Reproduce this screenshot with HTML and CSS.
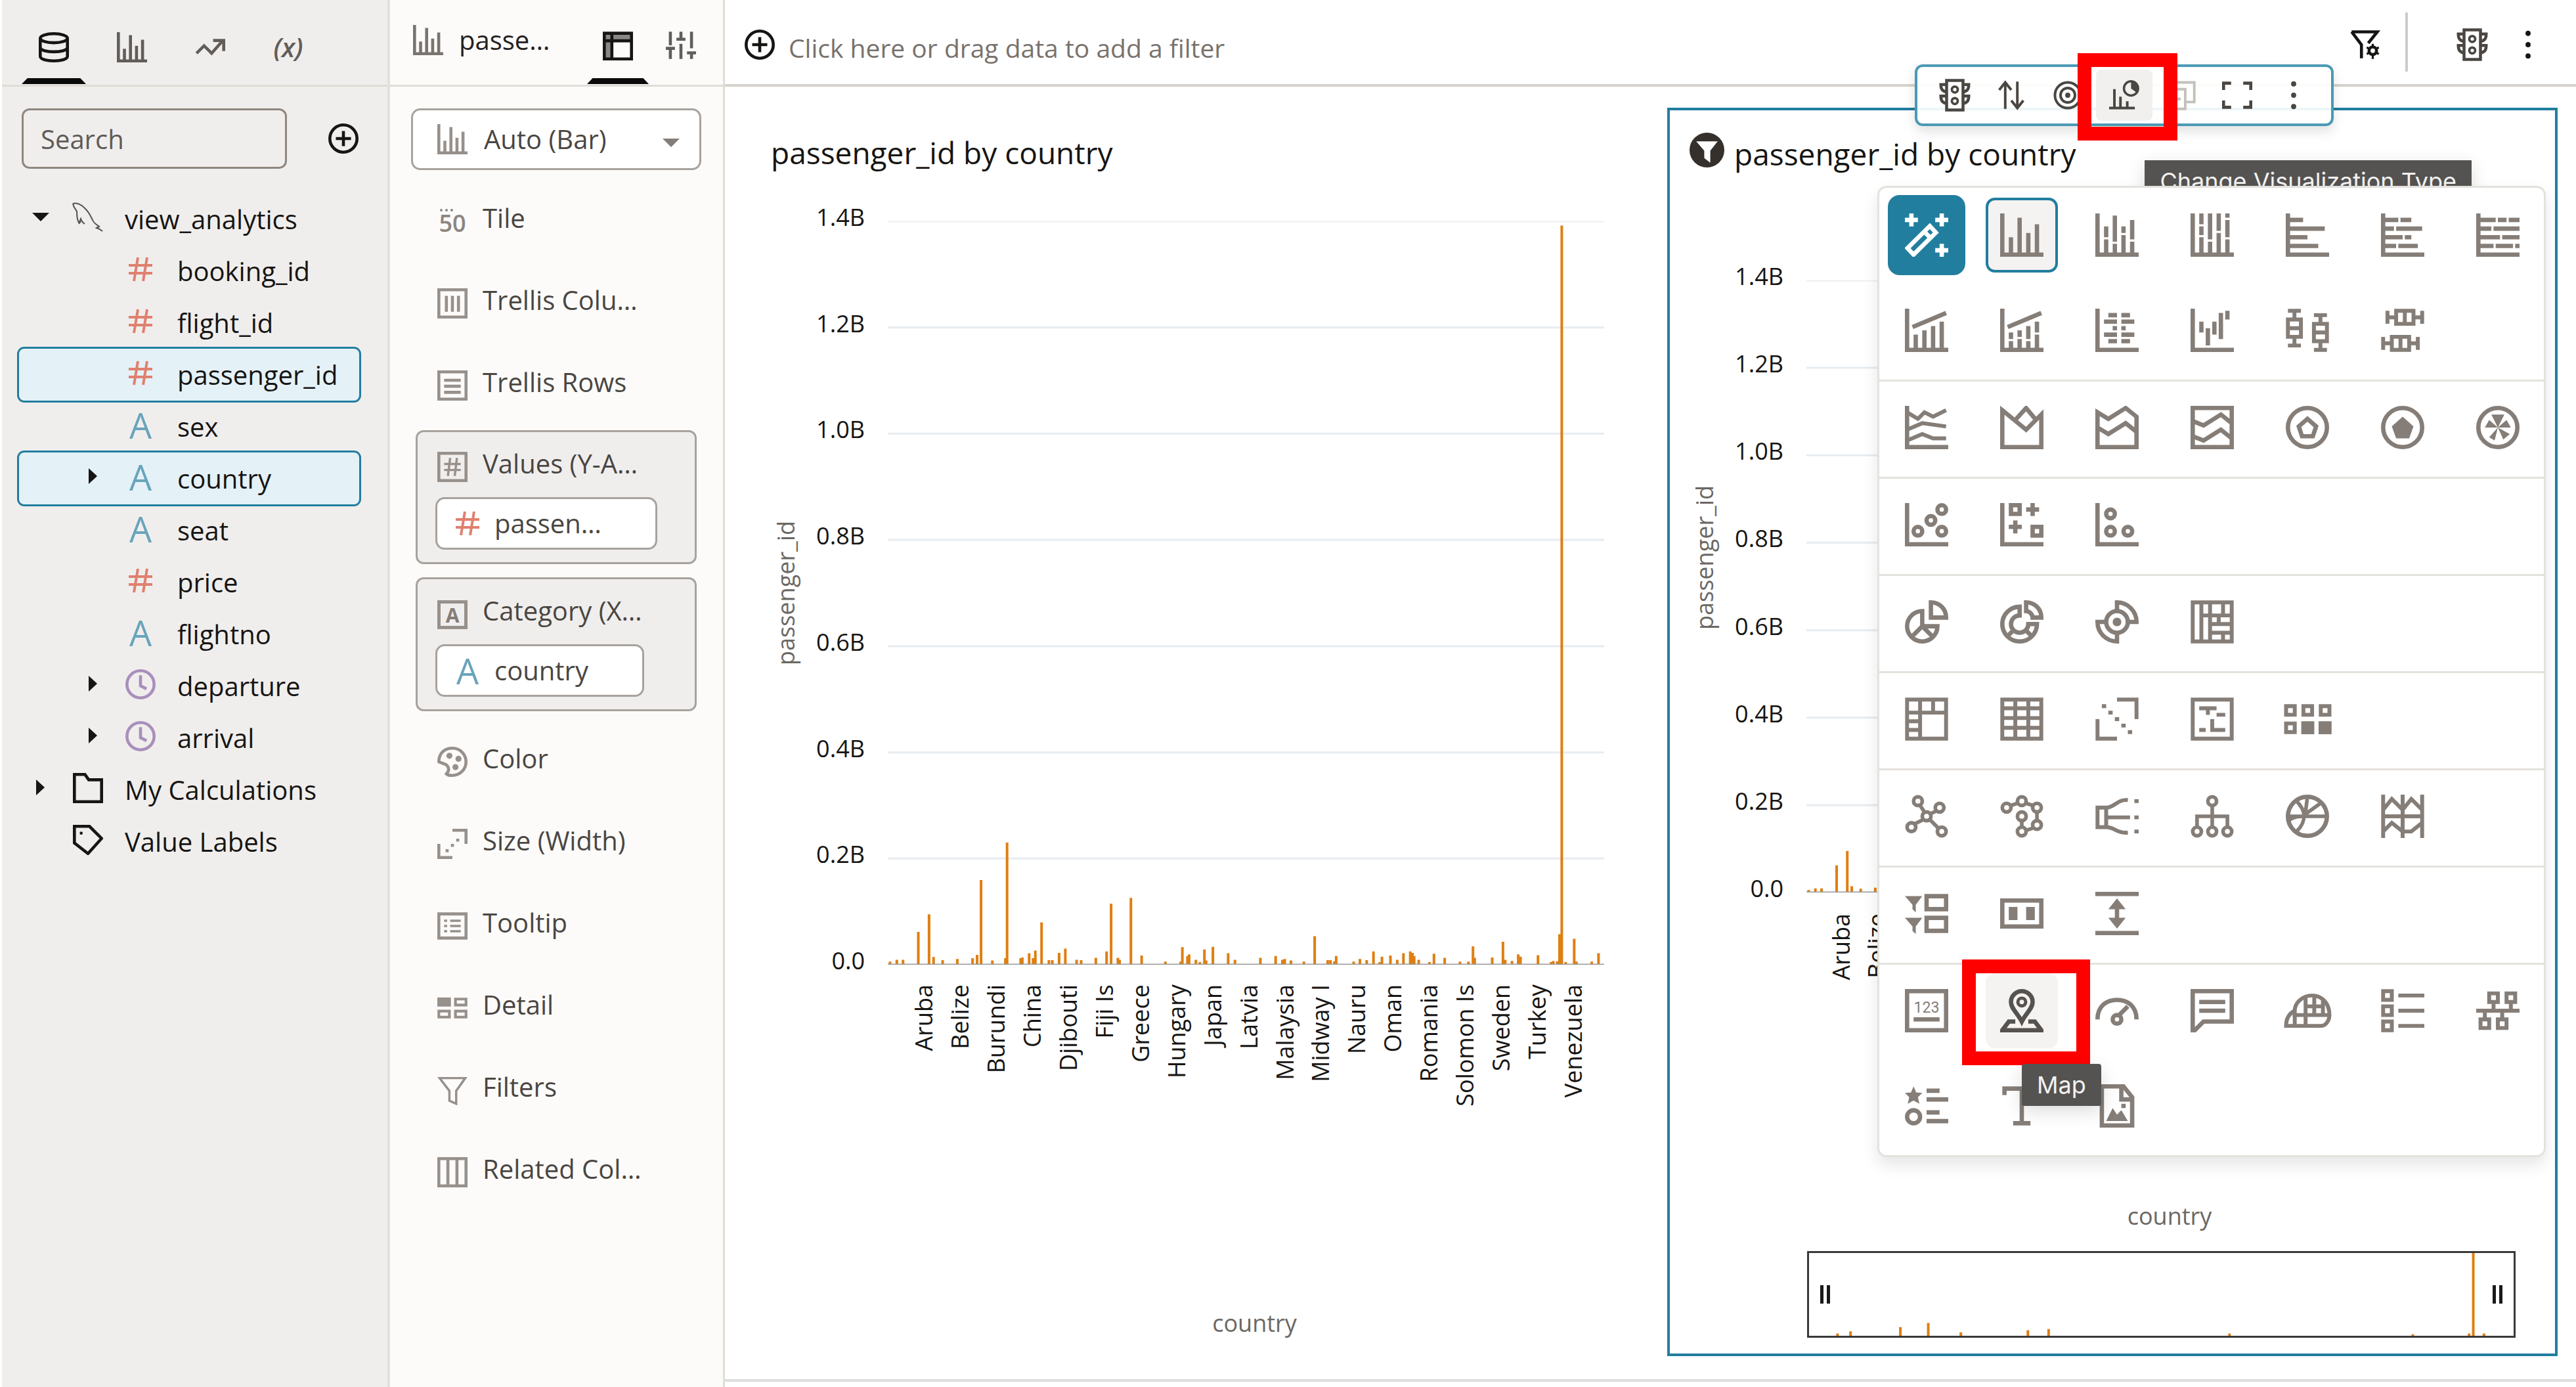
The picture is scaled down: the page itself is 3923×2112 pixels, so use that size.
FILE: index.html
```html
<!DOCTYPE html>
<html lang="en">
<head>
<meta charset="utf-8">
<meta name="viewport" content="width=device-width, initial-scale=1">
<title>passenger_id by country</title>
<link rel="stylesheet" href="styles.css">
</head>
<body>
<svg class="sprite" aria-hidden="true">
  <defs>
    <!-- chart data: one stroke per country, measured from the zero line -->
    <symbol id="plot" viewBox="0 0 1267 1947" preserveAspectRatio="none">
      <path class="gridlines" d="M0 0H1267M0 278H1267M0 556H1267M0 834H1267M0 1113H1267M0 1391H1267M0 1669H1267"/>
      <path class="bars" d="M4 1947v-8M16 1947v-13M27 1947v-13M54 1947v-86M73 1947v-132M81 1947v-20M97 1947v-12M123 1947v-15M150 1947v-17M158 1947v-26M165 1947v-222M185 1947v-11M208 1947v-17M211 1947v-320M235 1947v-17M238 1947v-19M250 1947v-30M257 1947v-17M261 1947v-37M272 1947v-111M285 1947v-12M291 1947v-12M303 1947v-31M314 1947v-42M334 1947v-13M342 1947v-12M368 1947v-18M387 1947v-35M395 1947v-160M407 1947v-18M410 1947v-13M430 1947v-175M449 1947v-24M491 1947v-8M518 1947v-8M521 1947v-46M530 1947v-23M533 1947v-27M545 1947v-13M552 1947v-7M560 1947v-40M563 1947v-11M575 1947v-47M602 1947v-30M614 1947v-13M659 1947v-18M686 1947v-23M698 1947v-13M702 1947v-15M713 1947v-11M736 1947v-8M755 1947v-75M778 1947v-12M783 1947v-12M790 1947v-9M793 1947v-23M824 1947v-8M835 1947v-15M847 1947v-12M859 1947v-35M870 1947v-7M874 1947v-21M889 1947v-24M901 1947v-13M912 1947v-30M924 1947v-35M928 1947v-31M931 1947v-23M939 1947v-13M958 1947v-7M966 1947v-29M985 1947v-18M1012 1947v-8M1027 1947v-8M1035 1947v-48M1038 1947v-18M1069 1947v-19M1088 1947v-60M1092 1947v-13M1104 1947v-10M1115 1947v-27M1119 1947v-21M1150 1947v-25M1173 1947v-7M1177 1947v-10M1184 1947v-9M1188 1947v-80M1192 1947V11M1199 1947v-7M1214 1947v-68M1218 1947v-8M1245 1947v-8M1257 1947v-30"/>
      <path class="zero" d="M0 1947H1267"/>
    </symbol>

    <!-- field and panel icons -->
    <symbol id="db" viewBox="0 0 20 20"><ellipse cx="10" cy="4" rx="9" ry="3"/><path d="M1 4v12c0 4 18 4 18 0V4M1 10c0 4 18 4 18 0"/></symbol>
    <symbol id="trend" viewBox="0 0 20 20"><path d="M1 14l5-5 5 5 7-8M12 5.500h7v7"/></symbol>
    <symbol id="plus" viewBox="0 0 20 20"><circle cx="10" cy="10" r="9"/><path d="M10 5v10M5 10h10"/></symbol>
    <symbol id="hash" viewBox="0 0 20 20"><path d="M8 1L5 19M15 1l-3 18M1 7h18M1 13h18"/></symbol>
    <symbol id="clock" viewBox="0 0 20 20"><circle cx="10" cy="10" r="9"/><path d="M10 4v7l4 2"/></symbol>
    <symbol id="folder" viewBox="0 0 20 20"><path d="M1 1h7l2.500 3.500H19V19H1z"/></symbol>
    <symbol id="tag" viewBox="0 0 20 20"><path d="M1 1h10l8 8-9 10L1 12z"/><circle class="f" cx="5.500" cy="5.500" r="1"/></symbol>
    <symbol id="dolphin" viewBox="0 0 48 46"><path d="M1 2c8-2 14 3 18 7 6 5 9 12 12 18 2 5 6 7 10 10l-4 2c3 1 6 2 9 5M1 2c1 6 4 8 6 12 0 6 0 12 3 17 2-2 2-4 3-6 1 4 3 6 6 8M10 33l3-4"/></symbol>
    <symbol id="down" viewBox="0 0 26 13"><path class="f" d="M0 0h26L13 13z"/></symbol>
    <symbol id="right" viewBox="0 0 14 26"><path class="f" d="M0 0l14 13L0 26z"/></symbol>
    <symbol id="layout" viewBox="0 0 20 20"><path fill="currentColor" fill-opacity=".5" stroke="none" d="M1 2h18v5H6v12H1z"/><path d="M1 2h18v17H1zM6 2v17M1 7h18"/></symbol>
    <symbol id="sliders" viewBox="0 0 20 20"><path d="M3 1v9M3 13v6M10 1v5M10 9v10M17 1v11M17 15v4M0 12h6M7 6h6M14 15h6"/></symbol>
    <symbol id="columns" viewBox="0 0 20 20"><path d="M1 1h18v18H1zM6 5v10.500M10 5v10.500M14 5v10.500"/></symbol>
    <symbol id="rows" viewBox="0 0 20 20"><path d="M1 1h18v18H1zM4.500 6.500h11M4.500 10.500h11M4.500 14.500h11"/></symbol>
    <symbol id="boxhash" viewBox="0 0 20 20"><path d="M1 1h18v18H1z"/><path stroke-width="1.500" d="M8.500 4L7 16M13 4l-1.500 12M4.500 8h11M4.500 12h11"/></symbol>
    <symbol id="palette" viewBox="0 0 20 20"><path d="M1 10C1 4 5 1 10 1s9 4 9 9-4 9-9 9c-2 0-3 0-4-1 2-2 2-4 0-6-2-1-3-1-5-2z"/><circle class="f" cx="8" cy="6" r="2"/><circle class="f" cx="14" cy="8" r="2"/><circle class="f" cx="12" cy="13.500" r="2"/></symbol>
    <symbol id="size" viewBox="0 0 20 20"><path d="M10 1h9v9M1 10v9h9"/><path d="M5.500 14.500h2M9 11h2M12.500 7.500h2"/></symbol>
    <symbol id="tooltip" viewBox="0 0 20 20"><path d="M1 2h18v16H1z"/><path stroke-width="1.500" d="M4.500 6.500h2M8.500 6.500h7M4.500 10h2M8.500 10h7M4.500 13.500h2M8.500 13.500h7"/></symbol>
    <symbol id="detail" viewBox="0 0 20 20"><path class="f" d="M0 3h9v6H0z"/><path stroke-width="1.800" d="M12 4h7v4h-7zM1 12h7v4H1zM12 12h7v4h-7z"/></symbol>
    <symbol id="funnel" viewBox="0 0 20 20"><path stroke-width="1.500" d="M1.500 2h17L12.500 10.500v8.500l-4.500-2v-6.500z"/></symbol>
    <symbol id="related" viewBox="0 0 20 20"><path d="M1 1h18v18H1zM7 1v18M13 1v18"/></symbol>
    <symbol id="funnelgear" viewBox="0 0 20 20"><path d="M1 1.500h17L12 9M1 1.500L7.500 10v8h1"/><circle cx="15" cy="14" r="2.500"/><path stroke-width="1.400" d="M15 9.500v2M15 16.500v3M11 11.800l1.500.8M17.500 15.400l1.500.8M19 11.800l-1.500.8M12.500 15.400l-1.500.8"/></symbol>
    <symbol id="filterdot" viewBox="0 0 52 52"><circle class="f" cx="26" cy="26" r="26"/><path fill="#fff" stroke="none" d="M10 13h32L31 27v18l-9-7V27z"/></symbol>
    <symbol id="traffic" viewBox="0 0 20 20"><path stroke-width="1.800" d="M5 1h10v18H5zM5 3.500H1.500c0 3 1 4 3.500 4.500M5 10.500H1.500c0 3 1 4 3.500 4.500M15 3.500h3.500c0 3-1 4-3.500 4.500M15 10.500h3.500c0 3-1 4-3.500 4.500"/><circle stroke-width="1.500" cx="10" cy="6.500" r="1.800"/><circle stroke-width="1.500" cx="10" cy="13.500" r="1.800"/></symbol>
    <symbol id="dots" viewBox="0 0 20 20"><circle class="f" cx="10" cy="2.500" r="1.700"/><circle class="f" cx="10" cy="10" r="1.700"/><circle class="f" cx="10" cy="17.500" r="1.700"/></symbol>
    <symbol id="sort" viewBox="0 0 20 20"><path stroke-width="1.700" d="M6 19V2M2 6.500L6 1.500l4 5M14 1v17M10 13.500l4 5 4-5"/></symbol>
    <symbol id="target" viewBox="0 0 20 20"><g stroke-width="1.700"><circle cx="10" cy="10" r="8.500"/><circle cx="10" cy="10" r="4.800"/></g><circle class="f" cx="10" cy="10" r="1.700"/></symbol>
    <symbol id="viztype" viewBox="0 0 20 20"><path stroke-width="1.700" d="M0 18.500h17M3.500 6v12M7.500 11v7M12 14v4"/><circle stroke-width="1.500" cx="14.500" cy="5.500" r="4.700"/><path class="f" d="M14.500 1v4.500l4 3A5 5 0 0 0 14.500 1z"/></symbol>
    <symbol id="copy" viewBox="0 0 20 20"><path stroke-width="1.700" d="M1 6h12v13H1zM5 6V1.500h14v13h-6M4 12.500h6M7 9.500v6"/></symbol>
    <symbol id="expand" viewBox="0 0 20 20"><path d="M1 6.500V2h5M14 2h5v4.500M19 13.500V18h-5M6 18H1v-4.500"/></symbol>

    <!-- visualization types -->
    <symbol id="wand" viewBox="0 0 20 20"><path d="M3 0v6M0 3h6M17 0v6M14 3h6M17 14v6M14 17h6"/><path d="M11.500 5.800l2.800 3L4 19l-2.800-3zM9 8.500l3 3"/></symbol>
    <symbol id="bar" viewBox="0 0 20 20"><path d="M1 0v19h19M5 11v8M9 2v17M13 9v10M17 5v14"/></symbol>
    <symbol id="barstack" viewBox="0 0 20 20"><path d="M1 0v19h19M5 6v5M5 12v7M9 1v12M9 14v5M13 6v3M13 10v9M17 3v9M17 13v6"/></symbol>
    <symbol id="barfull" viewBox="0 0 20 20"><path d="M1 0v19h19M5 0v5M5 6v4M5 11v8M9 0v12M9 13v6M13 0v8M13 9v10M17 0v2M17 3v8M17 12v7"/></symbol>
    <symbol id="hbar" viewBox="0 0 20 20"><path d="M1 0v19h19M1 3h7M1 7h17M1 11h9M1 15h14"/></symbol>
    <symbol id="hbarstack" viewBox="0 0 20 20"><path d="M1 0v19h19M1 3h7M9 3h5M1 7h5M7 7h12M1 11h9M11 11h3M1 15h6M8 15h9"/></symbol>
    <symbol id="hbarfull" viewBox="0 0 20 20"><path d="M1 0v19h19M1 3h8M10 3h4M15 3h5M1 7h6M8 7h12M1 11h10M12 11h8M1 15h7M9 15h8M18 15h2"/></symbol>
    <symbol id="combo" viewBox="0 0 20 20"><path d="M1 0v19h19M5 12v7M9 10v9M13 8v11M17 6v13M3.500 8.500L19 2"/></symbol>
    <symbol id="combostack" viewBox="0 0 20 20"><path d="M1 0v19h19M5 11v3M5 15v4M9 10v3M9 14v5M13 8v6M13 15v4M17 6v5M17 12v7M3.500 8.500L19 2"/></symbol>
    <symbol id="butterfly" viewBox="0 0 20 20"><path d="M1 0v19h19M6 3h4M12 3h4M4 6h6M12 6h6M8 9h2M12 9h2M4 12h6M12 12h6M6 15h4M12 15h4"/></symbol>
    <symbol id="waterfall" viewBox="0 0 20 20"><path d="M1 0v19h19M5 6v5M8 9v8M11 6v6M14 2v12M17 1v4"/></symbol>
    <symbol id="boxplot" viewBox="0 0 20 20"><path stroke-width="1.800" d="M1 1h6M4 1v4M1 5h6v8H1zM1 9h6M4 13v4M1 17h6M13 3h6M16 3v4M13 7h6v8h-6zM13 11h6M16 15v4M13 19h6"/></symbol>
    <symbol id="hboxplot" viewBox="0 0 20 20"><path stroke-width="1.800" d="M3 1v6M3 4h4M7 1h8v6H7zM11 1v6M15 4h4M19 1v6M1 13v6M1 16h4M5 13h8v6H5zM9 13v6M13 16h4M17 13v6"/></symbol>
    <symbol id="line" viewBox="0 0 20 20"><path d="M1 0v19h19"/><path stroke-width="1.800" d="M1 3l5 3 3-3 4 2 6-3M1 11l7-3 11 1.500M1 16l7-3 5 2h6"/></symbol>
    <symbol id="area" viewBox="0 0 20 20"><path d="M1 2v17h18V4l-7 7zM7 6.500L12 1l5 6"/></symbol>
    <symbol id="areastack" viewBox="0 0 20 20"><path d="M1 3v16h18V5l-5-4-8 5zM1 10l5 3 8-5 5 4"/></symbol>
    <symbol id="areafull" viewBox="0 0 20 20"><path d="M1 1h18v18H1zM1 7l5 2 8-5 5 4M1 14l5 2 8-5 5 4"/></symbol>
    <symbol id="radar" viewBox="0 0 20 20"><circle cx="10" cy="10" r="9"/><path d="M10 6l4 3.500-1.500 4.500h-5L6 9.500z"/></symbol>
    <symbol id="radarfill" viewBox="0 0 20 20"><circle cx="10" cy="10" r="9"/><path class="f" d="M10 5l5 4.500-2 5.500H7L5 9.500z"/></symbol>
    <symbol id="radarbar" viewBox="0 0 20 20"><circle cx="10" cy="10" r="9"/><path class="f" d="M7 4h6l-3 6zM16 10l-6 0 4-3.500zM4 10l6 0-4-3.500zM10 10l5.500 3-3 2.500zM10 10l-4 4.500 2.500 1.500z"/></symbol>
    <symbol id="scatter" viewBox="0 0 20 20"><path d="M1 0v19h19"/><circle cx="6" cy="13" r="2"/><circle cx="12" cy="8" r="2"/><circle cx="17" cy="3" r="2"/><circle cx="17" cy="13" r="2"/></symbol>
    <symbol id="scatter2" viewBox="0 0 20 20"><path d="M1 0v19h19M5 1h4v4H5zM15 0v6M12 3h6M7 8v6M4 11h6M15 11h4v4h-4z"/></symbol>
    <symbol id="scatter3" viewBox="0 0 20 20"><path d="M1 0v19h19"/><circle cx="7" cy="5" r="2"/><circle cx="7" cy="13" r="2"/><circle cx="15" cy="13" r="2"/></symbol>
    <symbol id="pie" viewBox="0 0 20 20"><path d="M12 1c4 0 7 3 7 7h-7zM8 5a7 7 0 1 0 7 7H8zM8 12l-5 5M8 12l5 5"/></symbol>
    <symbol id="donut" viewBox="0 0 20 20"><path d="M12 1c4 0 7 3 7 7h-4c0-1.500-1.500-3-3-3zM9 3a8 8 0 1 0 8 8h-4a4 4 0 1 1-4-4zM6 14l-3 3M12 14l3 3"/></symbol>
    <symbol id="sunburst" viewBox="0 0 20 20"><circle cx="10" cy="10" r="5"/><circle class="f" cx="10" cy="10" r="2"/><path d="M10 5V1c5 0 9 4 9 9h-4M10 15v4c-5 0-9-4-9-9h4"/></symbol>
    <symbol id="treemap" viewBox="0 0 20 20"><path stroke-width="1.800" d="M1 1h18v18H1zM5 1v18M9 1v18M5 7h14M15 1v6M9 11h10M13 7v4M9 15h10M15 15v4"/></symbol>
    <symbol id="pivot" viewBox="0 0 20 20"><path stroke-width="1.800" d="M1 1h18v18H1zM1 7h18M7 1v18M13 1v6M1 11h6M1 15h6"/></symbol>
    <symbol id="table" viewBox="0 0 20 20"><path stroke-width="1.800" d="M1 1h18v18H1zM7 1v18M13 1v18M1 5h18M1 9.500h18M1 14h18"/></symbol>
    <symbol id="diag" viewBox="0 0 20 20"><path stroke-width="1.800" d="M10 1h9v9M1 10v9h9M3 4h2M6 7h2M9 10h2M12 13h2M15 16h2"/></symbol>
    <symbol id="tagcloud" viewBox="0 0 20 20"><path stroke-width="1.800" d="M1 1h18v18H1zM4 5h8M8 5v3M12 8h4M10 10v5h6M4 15h3"/></symbol>
    <symbol id="tiles" viewBox="0 0 22 20"><path stroke-width="1.800" d="M1 4h4v4H1zM9 4h4v4H9zM17 4h4v4h-4zM1 12h4v4H1z"/><path class="f" d="M8 11h6v6H8zM16 11h6v6h-6z"/></symbol>
    <symbol id="network" viewBox="0 0 20 20"><g stroke-width="1.700"><circle cx="6" cy="3" r="2"/><circle cx="16" cy="6" r="2"/><circle cx="3" cy="15" r="2"/><circle cx="17" cy="17" r="2"/><circle cx="10" cy="10" r="2"/><path d="M7 5l2 3M14.500 7.500l-3 1.500M8.500 11.500l-4 2M11.500 11.500l4 4"/></g></symbol>
    <symbol id="network2" viewBox="0 0 20 20"><g stroke-width="1.700"><circle cx="10" cy="3" r="2"/><circle cx="3" cy="6" r="2"/><circle cx="17" cy="6" r="2"/><circle cx="10" cy="10" r="2"/><circle cx="17" cy="14" r="2"/><circle cx="10" cy="17" r="2"/><path d="M5 5l3-1M12 4l3 1M17 8v4M10 12v3M12 16.500l3-1"/></g></symbol>
    <symbol id="sankey" viewBox="0 0 20 20"><path stroke-width="1.800" d="M1 6h4v9H1zM5 6c4 0 5-4 10-3.500M5 10.500h11M5 15c4 0 5 3 10 2.500M18 3h2M18 10.500h2M18 17h2"/></symbol>
    <symbol id="tree" viewBox="0 0 20 20"><g stroke-width="1.700"><circle cx="10" cy="3" r="2"/><circle cx="3" cy="17" r="2"/><circle cx="10" cy="17" r="2"/><circle cx="17" cy="17" r="2"/><path d="M10 5v10M3 15v-5h14v5"/></g></symbol>
    <symbol id="chord" viewBox="0 0 20 20"><circle cx="10" cy="10" r="9"/><path stroke-width="1.700" d="M1 10h18M5 3c4 4 5 9 0 14M10 1L9 9l7-5M1 12c3-2 5-2 8-2"/></symbol>
    <symbol id="parallel" viewBox="0 0 20 20"><path stroke-width="1.800" d="M1 0v20M10 0v20M19 0v20M1 10h18M1 7l4-5 5 5 4-5 5 5M1 17l4-4 5 4h4l5-4"/></symbol>
    <symbol id="filterlist" viewBox="0 0 20 20"><path class="f" d="M0 2h8L5 6v3.500L3.500 8V6zM0 12h8l-3 4v3.500L3.500 18v-2z"/><path d="M10 2h9v6h-9zM10 12h9v6h-9z"/></symbol>
    <symbol id="pause" viewBox="0 0 20 20"><path d="M1 4h18v12H1z"/><path class="f" d="M4 7h4v6H4zM12 7h4v6h-4z"/></symbol>
    <symbol id="spacer" viewBox="0 0 20 20"><path d="M0 1h20M0 19h20M10 5v10"/><path class="f" d="M10 3l4 5H6zM10 17l4-5H6z"/></symbol>
    <symbol id="number" viewBox="0 0 20 20"><path d="M1 1h18v18H1zM4 14h12"/><text class="digits" x="10" y="11">123</text></symbol>
    <symbol id="map" viewBox="0 0 20 20"><path d="M10 15C8 11 5 9 5 6a5 5 0 0 1 10 0c0 3-3 5-5 9zM7 15H4l-3 4h18l-3-4h-3"/><circle stroke-width="1.500" cx="10" cy="6" r="1.800"/></symbol>
    <symbol id="gauge" viewBox="0 0 20 20"><path d="M1 14c0-6 4-9 9-9s9 3 9 9M11 12l4-4"/><circle cx="10" cy="14" r="2"/></symbol>
    <symbol id="note" viewBox="0 0 20 20"><path d="M1 1h18v14H6l-4 4H1zM4 6h12M4 10h12"/></symbol>
    <symbol id="globe" viewBox="0 0 22 20"><path stroke-width="1.800" d="M1 17c0-4 2-6 4-7C5 6 9 3 13 3s8 3 8 9c0 3-2 5-4 5zM5 9v8M10 4v13M4 12h17M10 8h8M14 3v9M18 5v7"/></symbol>
    <symbol id="list" viewBox="0 0 20 20"><path stroke-width="1.800" d="M1 1h4v4H1zM1 8h4v4H1zM1 15h4v4H1zM8 3h12M8 10h12M8 17h12"/></symbol>
    <symbol id="org" viewBox="0 0 20 20"><path stroke-width="1.800" d="M6 2h4v4H6zM14 2h4v4h-4zM2 14h4v4H2zM10 14h4v4h-4zM0 10h20M8 6v4M16 6v4M4 10v4M12 10v4"/></symbol>
    <symbol id="starlist" viewBox="0 0 20 20"><path class="f" d="M4 1l1.200 2.800L8 4 6 6l.7 3L4 7.500 1.300 9 2 6 0 4l2.800-.2z"/><circle cx="4" cy="15" r="3"/><path d="M10 3h6M10 7h10M10 13h6M10 17h10"/></symbol>
    <symbol id="textbox" viewBox="0 0 20 20"><path d="M2 5V2h16v3M10 2v16M6 18h8"/></symbol>
    <symbol id="image" viewBox="0 0 20 20"><path d="M3 1h10l4 5v13H3zM12 1v6h5"/><path class="f" d="M5 17l3-6 2 3 2-2 3 5zM12 9h2v2h-2z"/></symbol>
  </defs>
</svg>

<div class="app">
  <aside class="data-panel">
    <nav class="tabs" aria-label="Data panel">
      <button class="tab active" aria-label="Data"><svg class="icon"><use href="#db"/></svg></button>
      <button class="tab" aria-label="Visualizations"><svg class="icon"><use href="#bar"/></svg></button>
      <button class="tab" aria-label="Analytics"><svg class="icon"><use href="#trend"/></svg></button>
      <button class="tab parameter">(x)</button>
    </nav>
    <div class="search">
      <input type="search" placeholder="Search" aria-label="Search">
      <button aria-label="Add data"><svg class="icon"><use href="#plus"/></svg></button>
    </div>
    <ul class="tree">
      <li class="top"><svg class="caret-down"><use href="#down"/></svg><svg class="dolphin"><use href="#dolphin"/></svg><span>view_analytics</span></li>
      <li><svg class="field hash"><use href="#hash"/></svg><span>booking_id</span></li>
      <li><svg class="field hash"><use href="#hash"/></svg><span>flight_id</span></li>
      <li class="selected"><svg class="field hash"><use href="#hash"/></svg><span>passenger_id</span></li>
      <li><b class="attr">A</b><span>sex</span></li>
      <li class="selected"><svg class="caret-right"><use href="#right"/></svg><b class="attr">A</b><span>country</span></li>
      <li><b class="attr">A</b><span>seat</span></li>
      <li><svg class="field hash"><use href="#hash"/></svg><span>price</span></li>
      <li><b class="attr">A</b><span>flightno</span></li>
      <li><svg class="caret-right"><use href="#right"/></svg><svg class="icon clock"><use href="#clock"/></svg><span>departure</span></li>
      <li><svg class="caret-right"><use href="#right"/></svg><svg class="icon clock"><use href="#clock"/></svg><span>arrival</span></li>
      <li class="top"><svg class="caret-right"><use href="#right"/></svg><svg class="icon"><use href="#folder"/></svg><span>My Calculations</span></li>
      <li class="top"><svg class="icon"><use href="#tag"/></svg><span>Value Labels</span></li>
    </ul>
  </aside>

  <aside class="grammar-panel">
    <header class="grammar-head">
      <h2><svg class="icon"><use href="#bar"/></svg>passe…</h2>
      <button class="tab active" aria-label="Grammar"><svg class="icon"><use href="#layout"/></svg></button>
      <button class="tab" aria-label="Properties"><svg class="icon"><use href="#sliders"/></svg></button>
    </header>
    <div class="viz-select">
      <svg class="icon"><use href="#bar"/></svg>
      <select aria-label="Visualization type"><option>Auto (Bar)</option></select>
      <svg class="caret-down"><use href="#down"/></svg>
    </div>
    <ul class="slots">
      <li class="slot"><b class="fifty">50</b><span>Tile</span></li>
      <li class="slot"><svg class="icon"><use href="#columns"/></svg><span>Trellis Colu…</span></li>
      <li class="slot"><svg class="icon"><use href="#rows"/></svg><span>Trellis Rows</span></li>
      <li class="well">
        <div class="well-head"><svg class="icon"><use href="#boxhash"/></svg><span>Values (Y-A…</span></div>
        <button class="chip"><svg class="field hash"><use href="#hash"/></svg>passen…</button>
      </li>
      <li class="well">
        <div class="well-head"><b class="boxed">A</b><span>Category (X…</span></div>
        <button class="chip"><b class="attr">A</b>country</button>
      </li>
      <li class="slot"><svg class="icon"><use href="#palette"/></svg><span>Color</span></li>
      <li class="slot"><svg class="icon"><use href="#size"/></svg><span>Size (Width)</span></li>
      <li class="slot"><svg class="icon"><use href="#tooltip"/></svg><span>Tooltip</span></li>
      <li class="slot"><svg class="icon"><use href="#detail"/></svg><span>Detail</span></li>
      <li class="slot"><svg class="icon"><use href="#funnel"/></svg><span>Filters</span></li>
      <li class="slot"><svg class="icon"><use href="#related"/></svg><span>Related Col…</span></li>
    </ul>
  </aside>

  <main class="canvas">
    <header class="filter-bar">
      <button class="add-filter"><svg class="icon"><use href="#plus"/></svg><span>Click here or drag data to add a filter</span></button>
      <button aria-label="Filter settings"><svg class="icon"><use href="#funnelgear"/></svg></button>
      <i class="divider"></i>
      <button class="traffic" aria-label="Conditional formatting"><svg class="icon tall"><use href="#traffic"/></svg></button>
      <button class="more" aria-label="More"><svg class="icon"><use href="#dots"/></svg></button>
    </header>

    <div class="boards">
      <section class="viz">
        <h3>passenger_id by country</h3>
        <div class="chart">
          <div class="y-title"><span>passenger_id</span></div>
          <div class="ticks"><span>1.4B</span><span>1.2B</span><span>1.0B</span><span>0.8B</span><span>0.6B</span><span>0.4B</span><span>0.2B</span><span>0.0</span></div>
          <svg class="plot" role="img" aria-label="Bar chart of passenger_id by country"><use href="#plot"/></svg>
          <div class="countries"><span>Aruba</span><span>Belize</span><span>Burundi</span><span>China</span><span>Djibouti</span><span>Fiji Is</span><span>Greece</span><span>Hungary</span><span>Japan</span><span>Latvia</span><span>Malaysia</span><span>Midway I</span><span>Nauru</span><span>Oman</span><span>Romania</span><span>Solomon Is</span><span>Sweden</span><span>Turkey</span><span>Venezuela</span></div>
          <div class="x-title">country</div>
        </div>
      </section>

      <section class="viz focused">
        <h3><svg class="filter-dot"><use href="#filterdot"/></svg>passenger_id by country</h3>
        <div class="chart">
          <div class="y-title"><span>passenger_id</span></div>
          <div class="ticks"><span>1.4B</span><span>1.2B</span><span>1.0B</span><span>0.8B</span><span>0.6B</span><span>0.4B</span><span>0.2B</span><span>0.0</span></div>
          <svg class="plot" role="img" aria-label="Bar chart of passenger_id by country"><use href="#plot"/></svg>
          <div class="countries"><span>Aruba</span><span>Belize</span><span>Burundi</span><span>China</span><span>Djibouti</span><span>Fiji Is</span><span>Greece</span><span>Hungary</span><span>Japan</span><span>Latvia</span><span>Malaysia</span><span>Midway I</span><span>Nauru</span><span>Oman</span><span>Romania</span><span>Solomon Is</span><span>Sweden</span><span>Turkey</span><span>Venezuela</span></div>
          <div class="x-title">country</div>
          <div class="overview">
            <i class="handle"></i>
            <svg viewBox="0 0 1188 220" preserveAspectRatio="none" aria-hidden="true"><path class="bars" d="M48 220v-6M70 220v-12M154 220v-23M201 220v-34M256 220v-9M369 220v-15M404 220v-18M709 220v-6M1018 220v-4M1113 220v-6M1120 220V0M1138 220v-6"/></svg>
            <i class="handle"></i>
          </div>
        </div>

        <div class="viz-tip">Change Visualization Type</div>
        <div class="toolbar">
          <button aria-label="Conditional formatting"><svg class="icon tall"><use href="#traffic"/></svg></button>
          <button aria-label="Sort"><svg class="icon"><use href="#sort"/></svg></button>
          <button aria-label="Use as filter"><svg class="icon"><use href="#target"/></svg></button>
          <button class="hover" aria-label="Change Visualization Type"><svg class="icon"><use href="#viztype"/></svg><i class="mark"></i></button>
          <button class="off" aria-label="Duplicate" disabled><svg class="icon"><use href="#copy"/></svg></button>
          <button aria-label="Maximize"><svg class="icon"><use href="#expand"/></svg></button>
          <button aria-label="More"><svg class="icon"><use href="#dots"/></svg></button>
        </div>

        <div class="picker">
          <div class="group">
            <button class="auto" aria-label="Auto"><svg><use href="#wand"/></svg></button>
            <button class="current" aria-label="Bar"><svg><use href="#bar"/></svg></button>
            <button aria-label="Stacked Bar"><svg><use href="#barstack"/></svg></button>
            <button aria-label="100% Stacked Bar"><svg><use href="#barfull"/></svg></button>
            <button aria-label="Horizontal Bar"><svg><use href="#hbar"/></svg></button>
            <button aria-label="Horizontal Stacked"><svg><use href="#hbarstack"/></svg></button>
            <button aria-label="100% Horizontal Stacked"><svg><use href="#hbarfull"/></svg></button>
            <button aria-label="Combo"><svg><use href="#combo"/></svg></button>
            <button aria-label="Stacked Combo"><svg><use href="#combostack"/></svg></button>
            <button aria-label="Butterfly"><svg><use href="#butterfly"/></svg></button>
            <button aria-label="Waterfall"><svg><use href="#waterfall"/></svg></button>
            <button aria-label="Boxplot"><svg><use href="#boxplot"/></svg></button>
            <button aria-label="Horizontal Boxplot"><svg><use href="#hboxplot"/></svg></button>
          </div>
          <div class="group">
            <button aria-label="Line"><svg><use href="#line"/></svg></button>
            <button aria-label="Area"><svg><use href="#area"/></svg></button>
            <button aria-label="Stacked Area"><svg><use href="#areastack"/></svg></button>
            <button aria-label="100% Stacked Area"><svg><use href="#areafull"/></svg></button>
            <button aria-label="Radar Line"><svg><use href="#radar"/></svg></button>
            <button aria-label="Radar Area"><svg><use href="#radarfill"/></svg></button>
            <button aria-label="Radar Bar"><svg><use href="#radarbar"/></svg></button>
          </div>
          <div class="group">
            <button aria-label="Scatter"><svg><use href="#scatter"/></svg></button>
            <button aria-label="Scatter (Category)"><svg><use href="#scatter2"/></svg></button>
            <button aria-label="Stacked Scatter"><svg><use href="#scatter3"/></svg></button>
          </div>
          <div class="group">
            <button aria-label="Pie"><svg><use href="#pie"/></svg></button>
            <button aria-label="Donut"><svg><use href="#donut"/></svg></button>
            <button aria-label="Sunburst"><svg><use href="#sunburst"/></svg></button>
            <button aria-label="Treemap"><svg><use href="#treemap"/></svg></button>
          </div>
          <div class="group">
            <button aria-label="Pivot"><svg><use href="#pivot"/></svg></button>
            <button aria-label="Table"><svg><use href="#table"/></svg></button>
            <button aria-label="Correlation Matrix"><svg><use href="#diag"/></svg></button>
            <button aria-label="Tag Cloud"><svg><use href="#tagcloud"/></svg></button>
            <button aria-label="Picto"><svg class="wide"><use href="#tiles"/></svg></button>
          </div>
          <div class="group">
            <button aria-label="Network"><svg><use href="#network"/></svg></button>
            <button aria-label="Circular Network"><svg><use href="#network2"/></svg></button>
            <button aria-label="Sankey"><svg><use href="#sankey"/></svg></button>
            <button aria-label="Tree Diagram"><svg><use href="#tree"/></svg></button>
            <button aria-label="Chord Diagram"><svg><use href="#chord"/></svg></button>
            <button aria-label="Parallel Coordinates"><svg><use href="#parallel"/></svg></button>
          </div>
          <div class="group">
            <button aria-label="Dashboard Filters"><svg><use href="#filterlist"/></svg></button>
            <button aria-label="Button Bar"><svg><use href="#pause"/></svg></button>
            <button aria-label="Spacer"><svg><use href="#spacer"/></svg></button>
          </div>
          <div class="group">
            <button aria-label="Performance Tile"><svg><use href="#number"/></svg></button>
            <button class="hover" aria-label="Map"><svg><use href="#map"/></svg><i class="mark"></i><span class="map-tip">Map</span></button>
            <button aria-label="Gauge"><svg><use href="#gauge"/></svg></button>
            <button aria-label="Language Narrative"><svg><use href="#note"/></svg></button>
            <button aria-label="Spatial"><svg class="wide"><use href="#globe"/></svg></button>
            <button aria-label="List"><svg><use href="#list"/></svg></button>
            <button aria-label="Org Chart"><svg><use href="#org"/></svg></button>
            <button aria-label="Key Drivers"><svg><use href="#starlist"/></svg></button>
            <button aria-label="Text Box"><svg><use href="#textbox"/></svg></button>
            <button aria-label="Image"><svg><use href="#image"/></svg></button>
          </div>
        </div>
      </section>
    </div>
  </main>
</div>
</body>
</html>
```
FILE: styles.css
```css
*, *::before, *::after { box-sizing: border-box; }

body {
  margin: 0;
  background: #fff;
  color: #161513;
  font-family: "Open Sans", "Noto Sans", sans-serif;
  font-size: 40px;
  line-height: 54px;
}

ul { margin: 0; padding: 0; list-style: none; }
h2, h3 { margin: 0; font-weight: 400; }

button {
  display: flex;
  align-items: center;
  justify-content: center;
  padding: 0;
  border: 0;
  background: none;
  color: inherit;
  font: inherit;
}

svg { display: block; flex: none; fill: none; stroke: currentColor; stroke-width: 2; }
.f { fill: currentColor; stroke: none; }
.sprite { position: absolute; width: 0; height: 0; }
.icon { width: 46px; height: 46px; }
.icon.tall { width: 50px; height: 54px; }

.app { display: flex; min-height: 100vh; padding-left: 3px; }

/* Tabs shared by both side panels */
.tab {
  position: relative;
  width: 98px;
  height: 128px;
  padding-top: 16px;
  color: #625d59;
}
.tab.active { color: #161513; }
.tab.active::after {
  content: "";
  position: absolute;
  inset: auto 0 0;
  height: 9px;
  background: #0a0a0a;
  clip-path: polygon(9% 0, 91% 0, 100% 100%, 0 100%);
}
.tab.parameter { font-style: italic; font-weight: 600; font-size: 40px; }

/* Data panel */
.data-panel { flex: none; width: 591px; background: #f0eeed; border-right: 4px solid #e3e1dd; }
.tabs { display: flex; gap: 21px; height: 132px; padding-left: 30px; border-bottom: 3px solid #e0ddd8; }
.search { display: flex; align-items: center; gap: 63px; padding: 33px 44px 37px 30px; }
.search input {
  flex: 1;
  min-width: 0;
  height: 92px;
  padding: 0 26px;
  border: 3px solid #8f867f;
  border-radius: 12px;
  background: transparent;
  color: inherit;
  font: inherit;
  appearance: none;
}
.search input::placeholder { color: #5f5b57; opacity: 1; }

.tree { padding: 0 43px 0 26px; }
.tree li {
  display: grid;
  grid-template-columns: 70px 70px 1fr;
  align-items: center;
  height: 79px;
  padding-left: 80px;
}
.tree li.top { padding-left: 0; }
.tree li > :nth-last-child(2) { grid-column: 2; justify-self: center; margin-bottom: 6px; }
.tree li > :last-child { grid-column: 3; padding-left: 21px; white-space: nowrap; }
.tree li.selected { background: #e4f1f7; border-radius: 8px; box-shadow: 0 0 0 3px #227e9e; }
.caret-right { width: 13px; height: 26px; justify-self: center; margin: 0 6px 8px 0; }
.caret-down { width: 26px; height: 13px; justify-self: center; margin: 0 4px 6px 0; }
.dolphin { width: 48px; height: 46px; stroke-width: 2; color: #55514d; }
.field { width: 40px; height: 40px; }
.hash { color: #e0806f; }
.attr { color: #68a4bb; font-size: 54px; font-weight: 400; line-height: 54px; }
.clock { color: #a98fbb; stroke-width: 2; }

/* Grammar panel */
.grammar-panel { flex: none; width: 510px; background: #fcfbfa; border-right: 3px solid #e0ddd8; color: #4a4642; }
.grammar-head { display: flex; gap: 2px; height: 132px; padding: 0 17px 0 35px; border-bottom: 3px solid #e0ddd8; }
.grammar-head h2 {
  flex: 1;
  display: flex;
  align-items: center;
  gap: 24px;
  padding-bottom: 8px;
  color: #24211f;
  font-size: 40px;
}
.grammar-head h2 svg { color: #7a746f; }
.grammar-head .tab { width: 94px; padding-top: 10px; }
.viz-select {
  display: flex;
  align-items: center;
  height: 94px;
  margin: 33px 33px 10px 32px;
  padding: 0 30px 0 37px;
  border: 3px solid #a8a29d;
  border-radius: 14px;
  background: #fff;
  color: #97908b;
}
.viz-select select {
  flex: 1;
  height: 88px;
  padding: 0 0 0 25px;
  border: 0;
  background: none;
  color: #4a4642;
  font: inherit;
  appearance: none;
}
.viz-select .caret-down { margin: 10px 0 0; color: #857d77; }

.slots { display: flex; flex-direction: column; }
.slot, .well-head { display: flex; align-items: center; gap: 23px; white-space: nowrap; }
.slot { height: 125px; padding-left: 72px; }
.slot .icon, .well-head .icon { margin-top: 10px; color: #97908b; }
.fifty {
  width: 46px;
  margin-top: 12px;
  color: #8c8580;
  font-size: 36px;
  font-weight: 600;
  line-height: 36px;
  text-align: center;
}
.fifty::before {
  content: "";
  display: block;
  width: 20px;
  margin-left: 4px;
  border-top: 4px dotted #8c8580;
}
.well {
  height: 204px;
  margin: 11px 40px 9px 39px;
  padding: 21px 27px;
  border: 3px solid #a8a29d;
  border-radius: 12px;
  background: #f0eeed;
}
.well-head { height: 54px; margin: 0 0 24px 3px; }
.boxed {
  width: 46px;
  height: 44px;
  margin-top: 12px;
  border: 5px solid #97908b;
  color: #857d77;
  font-size: 30px;
  line-height: 35px;
  text-align: center;
}
.chip {
  gap: 21px;
  height: 80px;
  padding: 0 82px 0 26px;
  border: 3px solid #a8a29d;
  border-radius: 14px;
  background: #fff;
}
.chip .attr { width: 40px; text-align: center; }

/* Canvas */
.canvas { flex: 1; min-width: 0; display: flex; flex-direction: column; }
.filter-bar {
  flex: none;
  display: flex;
  align-items: center;
  height: 132px;
  padding: 8px 50px 0 30px;
  border-bottom: 4px solid #d6d2cd;
}
.add-filter { gap: 21px; margin-right: auto; }
.add-filter span { padding-top: 10px; color: #79726c; font-size: 39px; }
.divider { width: 4px; height: 90px; margin: 0 73px 8px 38px; background: #d0cbc6; }
.traffic { color: #4a4642; margin-right: 37px; }

.boards {
  flex: 1;
  display: grid;
  grid-template-columns: 1435fr 1356fr;
  margin-bottom: 8px;
  padding-right: 28px;
  border-bottom: 4px solid #dedede;
}
.viz { display: flex; flex-direction: column; padding: 70px 96px 61px 70px; }
.viz h3 { display: flex; align-items: center; font-size: 46px; line-height: 60px; }

.chart {
  flex: 1;
  display: grid;
  grid-template: minmax(600px, 1fr) 522px auto / 45px 98px 1fr;
  padding-top: 75px;
  font-size: 36px;
  line-height: 48px;
}
.y-title { display: flex; align-items: center; justify-content: center; color: #6b6864; }
.y-title span, .countries span { writing-mode: vertical-rl; transform: rotate(180deg); white-space: nowrap; }
.ticks {
  display: flex;
  flex-direction: column;
  justify-content: space-between;
  align-items: flex-end;
  margin: -30px 0 -18px;
}
.plot { width: calc(100% - 35px); height: 100%; margin-left: 35px; overflow: visible; }
.gridlines { stroke: #e7ecf1; stroke-width: 3; vector-effect: non-scaling-stroke; }
.bars { stroke: #de7f12; stroke-width: 4; vector-effect: non-scaling-stroke; }
.zero { stroke: #999; stroke-width: 3; vector-effect: non-scaling-stroke; }
.countries {
  grid-column: 3;
  display: flex;
  align-items: flex-start;
  padding: 30px 19px 0 63px;
}
.countries span { flex: 1 1 0; min-width: 0; line-height: 54px; }
.x-title { grid-column: 3; padding-left: 61px; color: #6b6864; text-align: center; }

.focused {
  position: relative;
  margin: 32px 0 35px;
  padding: 34px 60px 24px 30px;
  border: 4px solid #227e9e;
}
.focused h3 { gap: 15px; }
.filter-dot { width: 53px; height: 53px; margin-bottom: 10px; color: #35302b; }
.focused .chart { grid-template-rows: minmax(500px, 1fr) 469px 77px 132px; padding-top: 162px; }
.focused .y-title { padding-bottom: 88px; }
.focused .countries { padding: 32px 19px 0 61px; }
.overview {
  grid-column: 3;
  display: flex;
  align-items: center;
  margin-left: 36px;
  border: 3px solid #3a3a3a;
}
.overview svg { width: 100%; height: 100%; margin: 0 -32px; }
.handle { flex: none; width: 15px; height: 28px; margin: 0 0 0 17px; border: solid #1a1a1a; border-width: 0 5px; }
.handle:last-child { margin: 0 17px 0 0; }

/* Overlays on the focused visualization */
.toolbar {
  position: absolute;
  top: -70px;
  right: 337px;
  display: flex;
  align-items: center;
  height: 94px;
  padding: 0 14px;
  border: 4px solid #4a9ab5;
  border-radius: 12px;
  background: rgba(255, 255, 255, .92);
  box-shadow: 0 8px 18px rgba(0, 0, 0, .12);
  color: #4a4642;
}
.toolbar button { position: relative; width: 86px; height: 78px; }
.toolbar .hover { background: #f1f0ee; border-radius: 8px; }
.toolbar .off { color: #c4c0bc; }
.mark { position: absolute; border: 21px solid #f00; z-index: 1; }
.toolbar .mark { inset: -25px -38px -30px -28px; }
.viz-tip, .map-tip {
  position: absolute;
  padding: 8px 23px;
  background: #555351;
  color: #f2f2f2;
  font: 36px/48px Inter, sans-serif;
  box-shadow: 0 8px 28px rgba(0, 0, 0, .14);
  white-space: nowrap;
}
.viz-tip { top: 76px; right: 127px; }
.map-tip { top: 138px; left: 55px; border-radius: 4px; z-index: 1; }

.picker {
  position: absolute;
  top: 115px;
  right: 14px;
  border: 3px solid #e4e2dd;
  border-radius: 14px;
  background: #fff;
  box-shadow: 0 12px 24px rgba(0, 0, 0, .1);
  color: #857d77;
}
.group {
  display: grid;
  grid-template-columns: repeat(7, 110px);
  gap: 31px 35px;
  padding: 13px 15px 18px 17px;
  border-bottom: 3px solid #e4e2dd;
}
.group:first-child { padding-top: 15px; }
.group:last-child { border-bottom: 0; }
.group button { position: relative; height: 114px; border-radius: 14px; }
.group svg { width: 66px; height: 66px; }
.group svg.wide { width: 73px; }
.group .auto { background: #227e9e; color: #fff; box-shadow: 0 0 0 4px #227e9e; }
.group .current { border: 4px solid #227e9e; background: #f5f3f2; }
.group .hover { background: #f5f3f2; color: #55524f; }
.group .mark { inset: -21px -49px -26px -36px; }
.digits { fill: currentColor; stroke: none; font: 7px Roboto, sans-serif; text-anchor: middle; }
```
